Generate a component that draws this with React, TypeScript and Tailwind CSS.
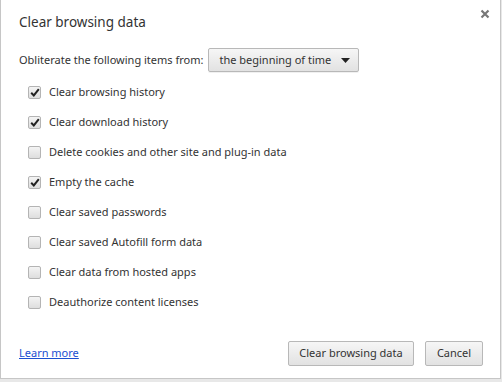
import { useState } from "react";

const items = [
  { label: "Clear browsing history", checked: true },
  { label: "Clear download history", checked: true },
  { label: "Delete cookies and other site and plug-in data", checked: false },
  { label: "Empty the cache", checked: true },
  { label: "Clear saved passwords", checked: false },
  { label: "Clear saved Autofill form data", checked: false },
  { label: "Clear data from hosted apps", checked: false },
  { label: "Deauthorize content licenses", checked: false },
];

function Box({ checked, onClick }: { checked: boolean; onClick: () => void }) {
  return (
    <button
      onClick={onClick}
      className="flex h-[13px] w-[13px] shrink-0 items-center justify-center rounded-[2px] border border-[#b4b4b4] bg-gradient-to-b from-[#f4f4f4] to-[#dedede]"
    >
      {checked && (
        <svg width="10" height="9" viewBox="0 0 10 9">
          <path d="M1.2 4.8 L3.8 7.4 L8.8 1.2" fill="none" stroke="#222" strokeWidth="2" />
        </svg>
      )}
    </button>
  );
}

export default function App() {
  const [state, setState] = useState(items.map((i) => i.checked));

  return (
    <div className="h-[382px] w-[502px] bg-[#e8e8e8]" style={{ fontFamily: '"Noto Sans", "Open Sans", sans-serif' }}>
      <div className="relative flex h-[379px] w-[501px] flex-col whitespace-nowrap border-x border-b border-[#c6c6c6] bg-white text-[11px] text-[#333]">
        <button className="absolute right-[9px] top-[8px]">
          <svg width="12" height="12" viewBox="0 0 12 12">
            <path d="M2.5 2.5 L9.5 9.5 M9.5 2.5 L2.5 9.5" stroke="#777" strokeWidth="2.2" />
          </svg>
        </button>

        <h1 className="pl-[18px] pt-[10px] text-[13.5px] leading-[24px] text-[#333]">Clear browsing data</h1>

        <div className="mt-[14px] flex items-center pl-[18px]">
          <span>Obliterate the following items from:</span>
          <div className="ml-[5px] flex h-[24px] w-[151px] items-center justify-between rounded-[2px] border border-[#b8b8b8] bg-gradient-to-b from-[#f6f6f6] to-[#e2e2e2] pl-[10px] pr-[8px] shadow-[0_1px_0_rgba(0,0,0,0.06)]">
            <span>the beginning of time</span>
            <svg width="9" height="5" viewBox="0 0 9 5">
              <path d="M0 0 H9 L4.5 5 Z" fill="#222" />
            </svg>
          </div>
        </div>

        <div className="mt-[5px] flex flex-col pl-[27px]">
          {items.map((item, i) => (
            <label key={item.label} className="flex h-[30px] items-center gap-[8px]">
              <Box
                checked={state[i]}
                onClick={() => setState((s) => s.map((v, j) => (j === i ? !v : v)))}
              />
              <span>{item.label}</span>
            </label>
          ))}
        </div>

        <div className="mt-auto flex items-center pb-[12px] pl-[18px] pr-[17px]">
          <a href="#" className="text-[#1b4fd1] underline">
            Learn more
          </a>
          <div className="ml-auto flex gap-[11px]">
            <button className="h-[25px] w-[126px] rounded-[2px] border border-[#b8b8b8] bg-gradient-to-b from-[#f6f6f6] to-[#e2e2e2] text-[#333]">
              Clear browsing data
            </button>
            <button className="h-[25px] w-[58px] rounded-[2px] border border-[#b8b8b8] bg-gradient-to-b from-[#f6f6f6] to-[#e2e2e2] text-[#333]">
              Cancel
            </button>
          </div>
        </div>
      </div>
    </div>
  );
}
